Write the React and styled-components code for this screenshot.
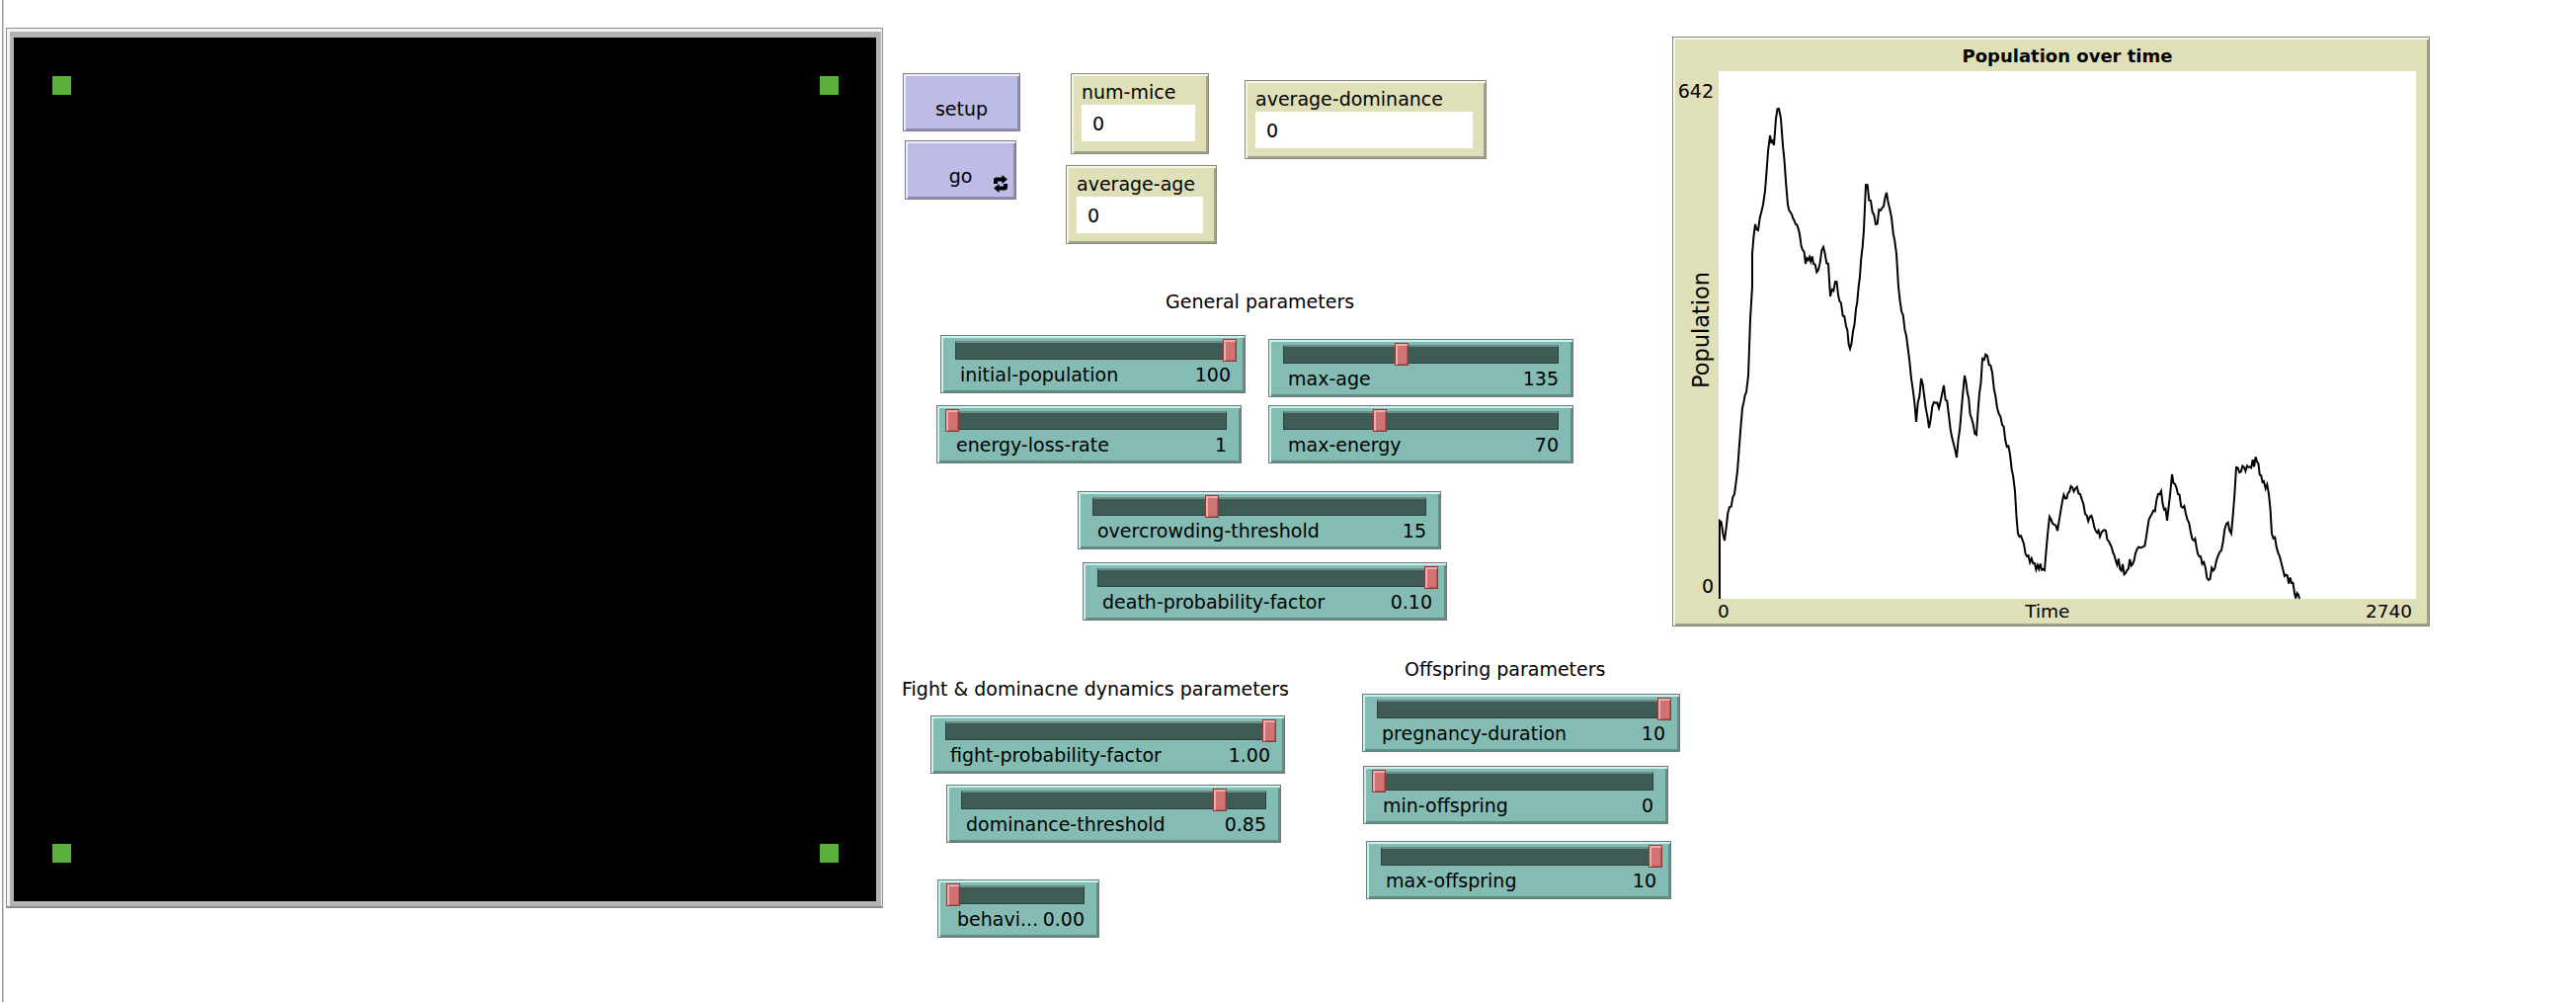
import React from 'react';
import styled, { createGlobalStyle, css } from 'styled-components';

// widget positions are NetLogo interface coordinates (free canvas)
const SLIDERS = [
    { x: 952, y: 339, w: 309, label: 'initial-population', value: '100', pos: 1 },
    { x: 1284, y: 343, w: 309, label: 'max-age', value: '135', pos: 0.43 },
    { x: 948, y: 410, w: 309, label: 'energy-loss-rate', value: '1', pos: 0 },
    { x: 1284, y: 410, w: 309, label: 'max-energy', value: '70', pos: 0.35 },
    { x: 1091, y: 497, w: 368, label: 'overcrowding-threshold', value: '15', pos: 0.357 },
    { x: 1096, y: 569, w: 369, label: 'death-probability-factor', value: '0.10', pos: 1 },
    { x: 942, y: 724, w: 359, label: 'fight-probability-factor', value: '1.00', pos: 1 },
    { x: 958, y: 794, w: 339, label: 'dominance-threshold', value: '0.85', pos: 0.85 },
    { x: 949, y: 890, w: 164, label: 'behavi...', value: '0.00', pos: 0 },
    { x: 1379, y: 702, w: 322, label: 'pregnancy-duration', value: '10', pos: 1 },
    { x: 1380, y: 775, w: 309, label: 'min-offspring', value: '0', pos: 0 },
    { x: 1383, y: 851, w: 309, label: 'max-offspring', value: '10', pos: 1 },
];

const MONITORS = [
    { x: 1084, y: 74, w: 140, h: 82, label: 'num-mice', value: '0' },
    { x: 1260, y: 81, w: 245, h: 80, label: 'average-dominance', value: '0' },
    { x: 1079, y: 167, w: 153, h: 80, label: 'average-age', value: '0' },
];

const NOTES = [
    { x: 1180, y: 293, text: 'General parameters' },
    { x: 913, y: 685, text: 'Fight & dominacne dynamics parameters' },
    { x: 1422, y: 665, text: 'Offspring parameters' },
];

// hand traced from the run, in plot pixels (706 x 534)
const TRACE = [
    [1, 534], [1, 455], [6, 475], [11, 441], [16, 428], [19, 405], [22, 365], [24, 341],
    [28, 325], [30, 308], [32, 251], [34, 218], [34, 185], [37, 155], [40, 161], [45, 135],
    [47, 121], [50, 81], [52, 65], [56, 75], [58, 48], [61, 38], [63, 48], [65, 75],
    [68, 111], [70, 135], [74, 145], [78, 155], [82, 165], [85, 181], [88, 195], [92, 188],
    [96, 195], [101, 201], [106, 178], [111, 195], [113, 228], [118, 213], [124, 235],
    [129, 258], [133, 281], [139, 241], [143, 208], [147, 161], [149, 115], [154, 131],
    [159, 155], [164, 141], [170, 123], [175, 148], [180, 185], [182, 218], [190, 268],
    [193, 291], [195, 311], [200, 355], [205, 311], [213, 361], [218, 335], [223, 341],
    [228, 318], [233, 348], [241, 391], [249, 308], [256, 351], [261, 368], [267, 291],
    [272, 288], [277, 305], [282, 341], [287, 358], [295, 388], [300, 425], [303, 468],
    [312, 491], [320, 498], [330, 505], [335, 451], [343, 465], [348, 435], [358, 421],
    [366, 428], [371, 448], [379, 455], [386, 471], [392, 465], [402, 495], [412, 508],
    [422, 488], [430, 481], [437, 451], [448, 425], [454, 455], [459, 408], [465, 428],
    [473, 448], [481, 475], [488, 491], [496, 515], [504, 495], [509, 485], [514, 458],
    [519, 468], [524, 401], [532, 401], [545, 395], [552, 415], [557, 428], [560, 468],
    [568, 491], [573, 511], [580, 518], [583, 528], [587, 530], [588, 534],
];

const buildPath = () => {
    let seed = 11;
    const rnd = () => {
        seed = (seed * 16807) % 2147483647;
        return seed / 2147483647;
    };
    let d = `M${TRACE[0][0]} ${TRACE[0][1]}`;
    for (let i = 1; i < TRACE.length; i++) {
        const [x0, y0] = TRACE[i - 1];
        const [x1, y1] = TRACE[i];
        const steps = Math.max(1, Math.round((x1 - x0) / 1.5));
        for (let s = 1; s <= steps; s++) {
            const t = s / steps;
            const x = x0 + (x1 - x0) * t;
            let y = y0 + (y1 - y0) * t;
            if (s < steps) y += (rnd() - 0.5) * 11;
            d += ` L${x.toFixed(1)} ${Math.min(534, y).toFixed(1)}`;
        }
    }
    return d;
};

const GlobalStyle = createGlobalStyle`
    html, body {
        margin: 0;
        padding: 0;
        background: #fff;
    }
    body {
        font-family: "DejaVu Sans", "Liberation Sans", sans-serif;
        color: #000;
    }
`;

const placed = css`
    position: absolute;
    left: ${(p) => p.$x}px;
    top: ${(p) => p.$y}px;
    box-sizing: border-box;
`;

const Interface = styled.div`
    position: relative;
    width: 2608px;
    height: 1014px;
    background: #fff;
    overflow: hidden;
    &::before{
        content: '';
        position: absolute;
        left: 2px;
        top: 0;
        bottom: 0;
        width: 1px;
        background: #999;
        box-shadow: 1px 0 0 #cfcfcf;
    }
`;

/* ---- view ---- */
const ViewFrame = styled.div`
    ${placed};
    border: 1px solid #8c8c8c;
    border-bottom-width: 2px;
    padding: 3px 1px 0 3px;
    background: #f2f2f2;
`;

const ViewBezel = styled.div`
    border-style: solid;
    border-color: #b3b3b3;
    border-width: 6px 5px 5px 4px;
`;

const World = styled.div`
    position: relative;
    width: 873px;
    height: 874px;
    background: #000;
`;

const Patch = styled.div`
    position: absolute;
    left: ${(p) => p.$x}px;
    top: ${(p) => p.$y}px;
    width: 19px;
    height: 19px;
    background: #5aaf3b;
`;

/* ---- buttons ---- */
const Button = styled.div`
    ${placed};
    width: ${(p) => p.$w}px;
    height: ${(p) => p.$h}px;
    background: #bcbce6;
    border: 1px solid #7c7c8c;
    box-shadow: inset 2px 2px 0 #ececfa, inset -2px -2px 0 #8d8db2;
    display: flex;
    justify-content: center;
    align-items: center;
    padding-top: 12px;
    font-size: 19px;
`;

const Forever = styled.svg`
    position: absolute;
    right: 7px;
    bottom: 6px;
    width: 16px;
    height: 18px;
`;

/* ---- monitors ---- */
const Monitor = styled.div`
    ${placed};
    width: ${(p) => p.$w}px;
    height: ${(p) => p.$h}px;
    background: #e0e0b8;
    border: 1px solid #8a8a7a;
    box-shadow: inset 2px 2px 0 #f6f6e6, inset -2px -2px 0 #a2a28c;
    padding: 0 13px 0 10px;
`;

const MonitorLabel = styled.div`
    margin-top: 5px;
    height: 26px;
    line-height: 26px;
    font-size: 19px;
    white-space: nowrap;
`;

const MonitorValue = styled.div`
    height: 37px;
    background: #fff;
    display: flex;
    align-items: center;
    padding-left: 11px;
    font-size: 19px;
`;

/* ---- sliders ---- */
const Slider = styled.div`
    ${placed};
    width: ${(p) => p.$w}px;
    height: 59px;
    background: #84bcb4;
    border: 1px solid #767676;
    box-shadow: inset 2px 2px 0 #c4f4f0, inset -2px -2px 0 #5d8e88;
`;

const Track = styled.div`
    position: relative;
    margin: 5px 14px 0 14px;
    height: 19px;
    box-sizing: border-box;
    background: #3f5b56;
    border: 1px solid #2d423f;
    border-top: 2px solid #6f8d88;
`;

const Thumb = styled.div`
    position: absolute;
    left: calc(${(p) => p.$pos * 100}% - 7px);
    top: -4px;
    width: 14px;
    height: 23px;
    box-sizing: border-box;
    background: #d27373;
    border: 1px solid #8c3b3b;
    box-shadow: inset 2px 2px 0 #f3aaaa, inset -1px -1px 0 #b25656;
`;

const SliderFooter = styled.div`
    display: flex;
    justify-content: space-between;
    margin-top: 4px;
    padding: 0 14px 0 19px;
    line-height: 22px;
    font-size: 19px;
    white-space: nowrap;
`;

/* ---- notes ---- */
const Note = styled.div`
    ${placed};
    font-size: 19px;
    line-height: 24px;
    white-space: nowrap;
`;

/* ---- plot ---- */
const Plot = styled.div`
    ${placed};
    width: 767px;
    height: 597px;
    background: #e0e0b8;
    border: 1px solid #888878;
    box-shadow: inset 2px 2px 0 #f6f6e6, inset -2px -2px 0 #a2a28c;
    display: grid;
    grid-template-columns: 46px 706px 1fr;
    grid-template-rows: 34px 534px 1fr;
`;

const PlotTitle = styled.div`
    grid-column: 2;
    grid-row: 1;
    text-align: center;
    font-weight: bold;
    font-size: 18px;
    line-height: 24px;
    padding-top: 7px;
`;

const YAxis = styled.div`
    grid-column: 1;
    grid-row: 2;
    position: relative;
    display: flex;
    flex-direction: column;
    justify-content: space-between;
    align-items: flex-end;
    padding: 8px 5px 1px 0;
    font-size: 19px;
    line-height: 24px;
`;

const YTitle = styled.div`
    position: absolute;
    left: 28px;
    top: 262px;
    transform: translate(-50%, -50%) rotate(-90deg);
    font-size: 22.5px;
    white-space: nowrap;
`;

const PlotArea = styled.div`
    grid-column: 2;
    grid-row: 2;
    background: #fff;
    svg{
        display: block;
    }
`;

const XAxis = styled.div`
    grid-column: 2;
    grid-row: 3;
    display: flex;
    justify-content: space-between;
    padding: 1px 4px 0 0;
    margin-left: -1px;
    font-size: 18.5px;
    line-height: 24px;
`;

const PLOT_PATH = buildPath();

const App = () => {
    return (
        <>
            <GlobalStyle />
            <Interface>
                <ViewFrame $x={6} $y={28}>
                    <ViewBezel>
                        <World>
                            <Patch $x={39} $y={39} />
                            <Patch $x={816} $y={39} />
                            <Patch $x={39} $y={816} />
                            <Patch $x={816} $y={816} />
                        </World>
                    </ViewBezel>
                </ViewFrame>

                <Button $x={914} $y={74} $w={119} $h={59}>setup</Button>
                <Button $x={916} $y={142} $w={113} $h={60}>
                    go
                    <Forever viewBox="0 0 16 18">
                        <path d="M1 9 V5.5 Q1 2.5 4 2.5 H9.5 V0 L15 4.5 L9.5 9 V6.5 H5 V9 Z" fill="#000" />
                        <path d="M15 9 V12.5 Q15 15.5 12 15.5 H6.5 V18 L1 13.5 L6.5 9 V11.5 H11 V9 Z" fill="#000" />
                    </Forever>
                </Button>

                {MONITORS.map((m) => (
                    <Monitor key={m.label} $x={m.x} $y={m.y} $w={m.w} $h={m.h}>
                        <MonitorLabel>{m.label}</MonitorLabel>
                        <MonitorValue>{m.value}</MonitorValue>
                    </Monitor>
                ))}

                {NOTES.map((n) => (
                    <Note key={n.text} $x={n.x} $y={n.y}>{n.text}</Note>
                ))}

                {SLIDERS.map((s) => (
                    <Slider key={s.label} $x={s.x} $y={s.y} $w={s.w}>
                        <Track>
                            <Thumb $pos={s.pos} />
                        </Track>
                        <SliderFooter>
                            <span>{s.label}</span>
                            <span>{s.value}</span>
                        </SliderFooter>
                    </Slider>
                ))}

                <Plot $x={1693} $y={37}>
                    <PlotTitle>Population over time</PlotTitle>
                    <YAxis>
                        <span>642</span>
                        <YTitle>Population</YTitle>
                        <span>0</span>
                    </YAxis>
                    <PlotArea>
                        <svg width="706" height="534" viewBox="0 0 706 534">
                            <path d={PLOT_PATH} fill="none" stroke="#000" strokeWidth="2" />
                        </svg>
                    </PlotArea>
                    <XAxis>
                        <span>0</span>
                        <span>Time</span>
                        <span>2740</span>
                    </XAxis>
                </Plot>
            </Interface>
        </>
    );
};

export default App;
